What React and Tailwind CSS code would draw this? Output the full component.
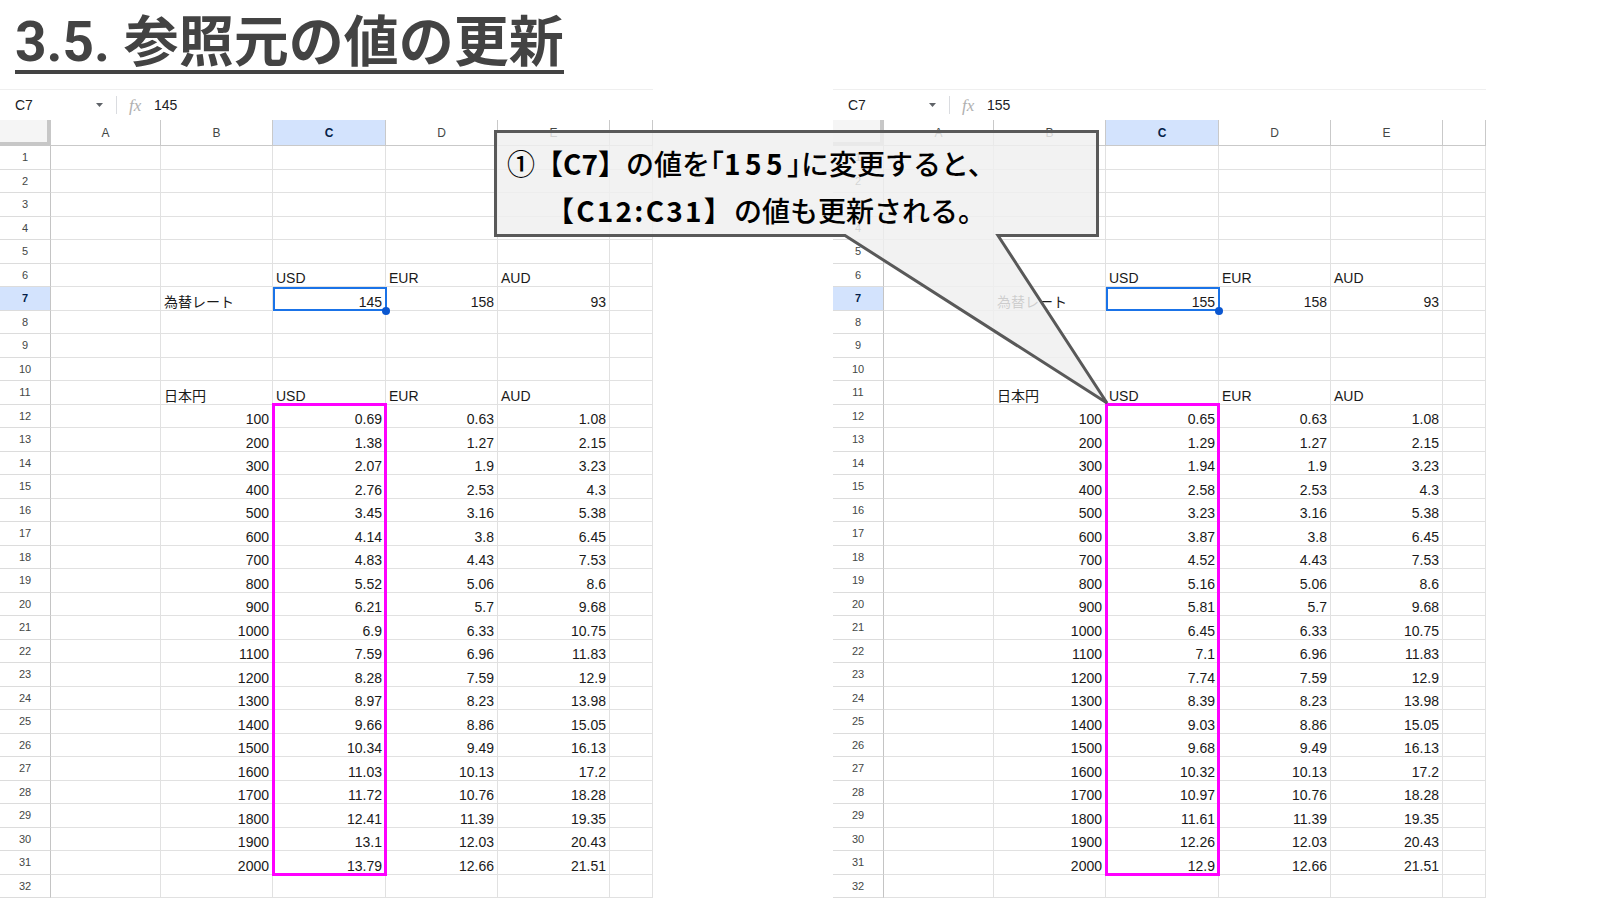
import React from 'react';

const YEN = Array.from({ length: 20 }, (_, i) => String((i + 1) * 100));
const EUR = ['0.63', '1.27', '1.9', '2.53', '3.16', '3.8', '4.43', '5.06', '5.7', '6.33', '6.96', '7.59', '8.23', '8.86', '9.49', '10.13', '10.76', '11.39', '12.03', '12.66'];
const AUD = ['1.08', '2.15', '3.23', '4.3', '5.38', '6.45', '7.53', '8.6', '9.68', '10.75', '11.83', '12.9', '13.98', '15.05', '16.13', '17.2', '18.28', '19.35', '20.43', '21.51'];
const USD_145 = ['0.69', '1.38', '2.07', '2.76', '3.45', '4.14', '4.83', '5.52', '6.21', '6.9', '7.59', '8.28', '8.97', '9.66', '10.34', '11.03', '11.72', '12.41', '13.1', '13.79'];
const USD_155 = ['0.65', '1.29', '1.94', '2.58', '3.23', '3.87', '4.52', '5.16', '5.81', '6.45', '7.1', '7.74', '8.39', '9.03', '9.68', '10.32', '10.97', '11.61', '12.26', '12.9'];

const COLS = [
  { key: 'A', w: 'w-[110px]' },
  { key: 'B', w: 'w-[112px]' },
  { key: 'C', w: 'w-[113px]' },
  { key: 'D', w: 'w-[112px]' },
  { key: 'E', w: 'w-[112px]' },
  { key: '', w: 'w-[43px]' },
];

const cellFont = { fontFamily: '"Liberation Sans", "Noto Sans CJK JP", sans-serif' };

// cells for one row: [text, align]
const buildRow = (n, rate, usd) => {
  const empty = ['', 'left'];
  if (n === 6) return [empty, empty, ['USD', 'left'], ['EUR', 'left'], ['AUD', 'left'], empty];
  if (n === 7) return [empty, ['為替レート', 'left'], [rate, 'right'], ['158', 'right'], ['93', 'right'], empty];
  if (n === 11) return [empty, ['日本円', 'left'], ['USD', 'left'], ['EUR', 'left'], ['AUD', 'left'], empty];
  if (n >= 12 && n <= 31) {
    const i = n - 12;
    return [empty, [YEN[i], 'right'], [usd[i], 'right'], [EUR[i], 'right'], [AUD[i], 'right'], empty];
  }
  return [empty, empty, empty, empty, empty, empty];
};

const Sheet = ({ rate, usd }) => {
  const rows = Array.from({ length: 32 }, (_, i) => i + 1);

  return (
    <div className="relative w-[653px] shrink-0" style={cellFont}>
      {/* formula bar */}
      <div className="h-[31px] border-t border-[#efefef] flex items-center text-[14px] text-[#202124]">
        <div className="w-[90px] pl-[15px]">C7</div>
        <svg className="ml-[6px] w-[7px] h-[4px]" viewBox="0 0 7 4">
          <path d="M0 0 L7 0 L3.5 4 Z" fill="#5f6368" />
        </svg>
        <div className="ml-[13px] w-px h-[18px] bg-[#dadce0]" />
        <div
          className="ml-[12px] w-[16px] text-[17px] italic text-[#b0b0b0] leading-none"
          style={{ fontFamily: '"Liberation Serif", serif' }}
        >
          fx
        </div>
        <div className="ml-[9px]">{rate}</div>
      </div>

      {/* column header */}
      <div className="h-[26px] flex text-[12px] text-[#444746]">
        <div className="w-[51px] bg-[#f5f5f5] border-r-4 border-b-4 border-[#c7c7c7]" />
        {COLS.map((c) => (
          <div
            key={c.key || 'x'}
            className={`${c.w} flex items-center justify-center border-r border-b border-[#c9c9c9] ${
              c.key === 'C' ? 'bg-[#d3e3fd] font-bold text-[#041e49]' : 'bg-white'
            }`}
          >
            {c.key}
          </div>
        ))}
      </div>

      {/* grid */}
      {rows.map((n) => {
        const cells = buildRow(n, rate, usd);
        return (
          <div key={n} className={`flex ${n % 2 === 1 ? 'h-[24px]' : 'h-[23px]'}`}>
            <div
              className={`w-[51px] flex items-center justify-center text-[11px] border-r border-[#c4c4c4] border-b border-b-[#dcdcdc] ${
                n === 7 ? 'bg-[#d3e3fd] font-bold text-[#041e49]' : 'text-[#444746]'
              }`}
            >
              {n}
            </div>
            {cells.map(([text, align], ci) => (
              <div
                key={ci}
                className={`${COLS[ci].w} flex items-end pb-[1px] px-[3px] border-r border-b border-[#e1e1e1] text-[14px] leading-none text-[#1a1a1a] whitespace-nowrap overflow-hidden ${
                  align === 'right' ? 'justify-end' : 'justify-start'
                }`}
              >
                {text}
              </div>
            ))}
          </div>
        );
      })}

      {/* selection C7 */}
      <div className="absolute left-[273px] top-[198px] w-[114px] h-[24px] border-2 border-[#1a73e8]" />
      <div className="absolute left-[382px] top-[218px] w-[8px] h-[8px] rounded-full bg-[#0b57d0]" />

      {/* highlight C12:C31 */}
      <div className="absolute left-[272px] top-[314px] w-[115px] h-[473px] border-[3px] border-[#ff00ff]" />
    </div>
  );
};

const Callout = () => (
  <>
    <svg className="absolute left-0 top-0 pointer-events-none" width="1600" height="900">
      <path
        d="M495.5 131.5 H1097.5 V235.5 H998 L1107 403 L845 235.5 H495.5 Z"
        fill="#f0f0f0"
        fillOpacity="0.84"
        stroke="#595959"
        strokeWidth="3"
        strokeLinejoin="miter"
      />
    </svg>
    <div
      className="absolute left-[507px] top-[140px] text-[28px] leading-[47px] text-black font-medium whitespace-nowrap"
      style={{ fontFamily: '"Noto Sans CJK JP", sans-serif' }}
    >
      <div>
        ①<span className="font-bold">【C7】</span>の値を
        <span className="[font-feature-settings:'halt']">「</span>
        <span className="font-bold tracking-[0.16em]">155</span>
        <span className="[font-feature-settings:'halt']">」</span>
        に変更すると、
      </div>
      <div className="pl-[39px]">
        <span className="font-bold tracking-[0.08em]">【C12:C31】</span>の値も更新される。
      </div>
    </div>
  </>
);

const App = () => {
  return (
    <div className="relative w-[1600px] h-[900px] bg-white overflow-hidden">
      <div className="h-[89px] pt-[15px] pl-[15px]">
        <div
          className="inline-block border-b-4 border-[#434343] text-[55px] leading-[55px] font-bold text-[#434343] whitespace-nowrap"
          style={{ fontFamily: 'Roboto, "Noto Sans CJK JP", sans-serif' }}
        >
          3.5. 参照元の値の更新
        </div>
      </div>

      <div className="flex gap-[180px]">
        <Sheet rate="145" usd={USD_145} />
        <Sheet rate="155" usd={USD_155} />
      </div>

      <Callout />
    </div>
  );
};

export default App;
